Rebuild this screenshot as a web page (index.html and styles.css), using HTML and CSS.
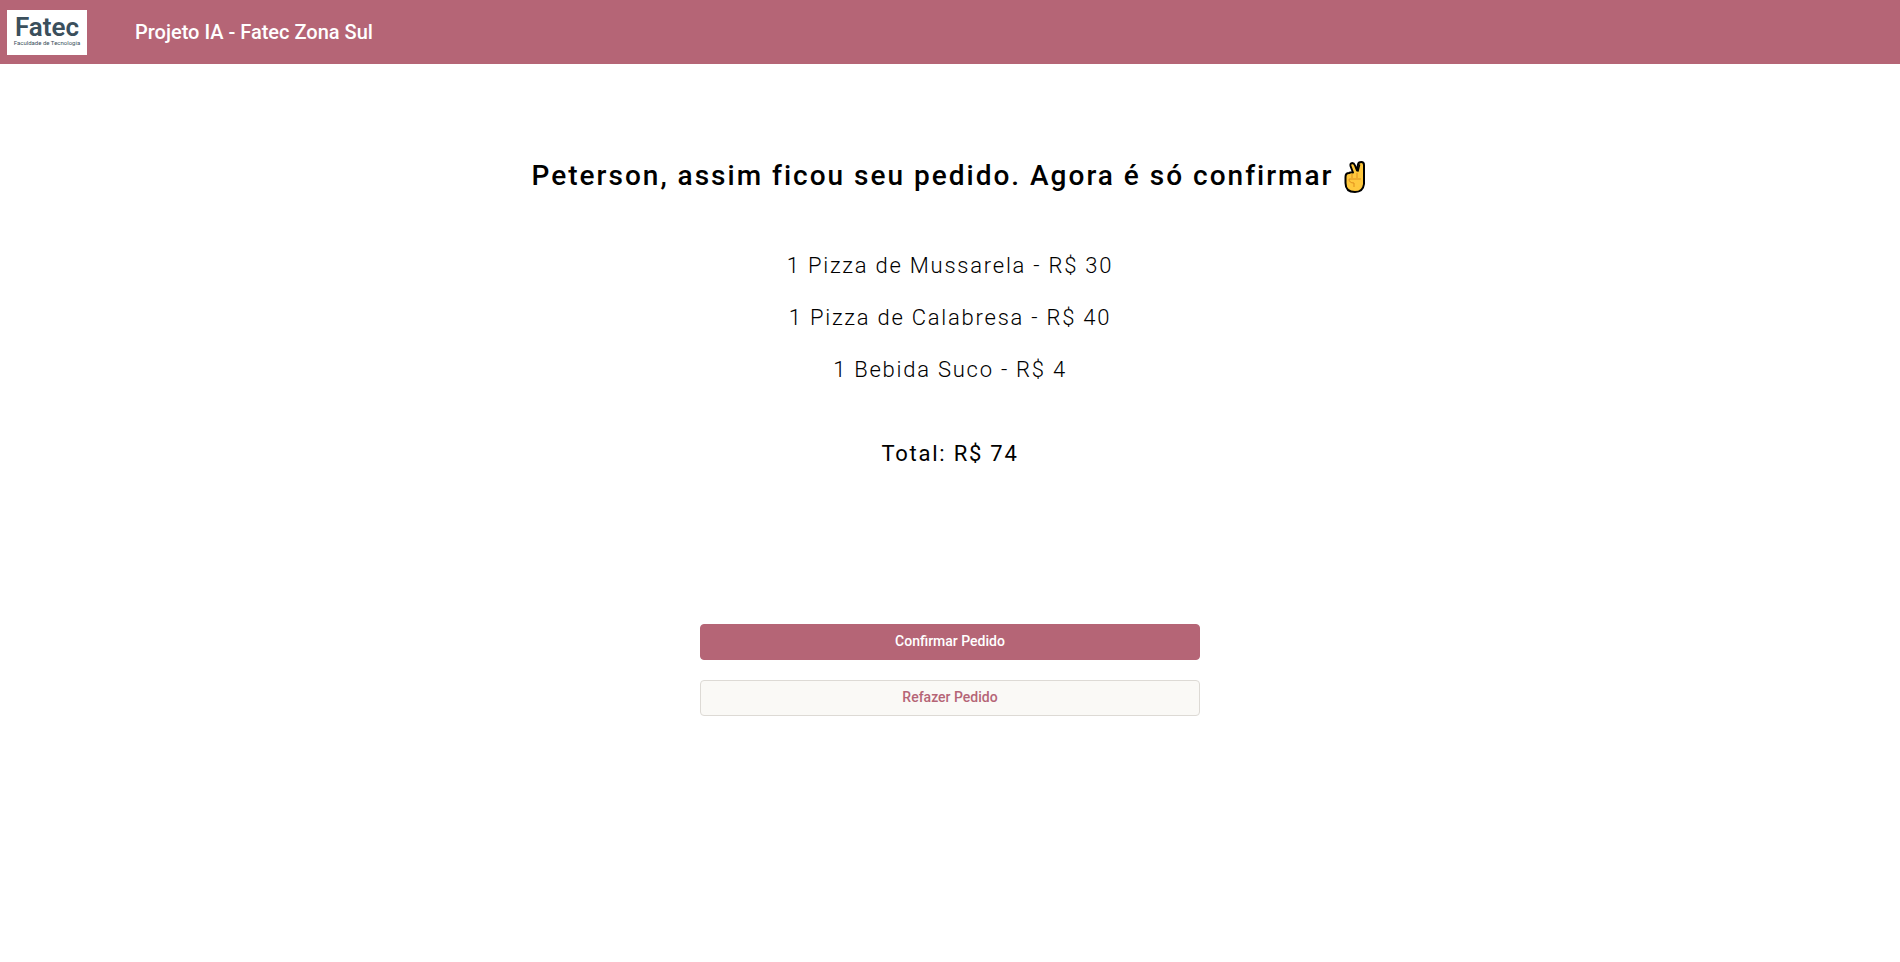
FILE: index.html
```html
<!DOCTYPE html>
<html lang="pt-BR">
<head>
  <meta charset="utf-8">
  <meta name="viewport" content="width=device-width, initial-scale=1">
  <title>Projeto IA - Fatec Zona Sul</title>
  <link rel="stylesheet" href="styles.css">
</head>
<body>
  <header class="topbar">
    <div class="logo">
      <span class="logo-name">Fatec</span>
      <span class="logo-tagline">Faculdade de Tecnologia</span>
    </div>
    <span class="topbar-title">Projeto IA - Fatec Zona Sul</span>
  </header>
  <main class="order">
    <h1 class="order-title">Peterson, assim ficou seu pedido. Agora é só confirmar
      <svg class="hand" viewBox="0 0 22 32" role="img" aria-label="Vitória">
        <path d="M1.500 16 Q1.500 12 5 12 Q7 11 9 11.500 L6.500 5 Q6 2.200 8.300 2 Q10 2 11 4.500 L13 9.500 L14 3.500 Q14.500 1 17.300 1 Q20 1 20 4 V23 Q19 31 11 31 Q1.500 31 1.500 22 Z" fill="#ffc83d" stroke="#000" stroke-width="2" stroke-linejoin="round"/>
        <path d="M15.500 4 L14 10" fill="none" stroke="#000" stroke-width="1.500" stroke-linecap="round"/>
        <path d="M8 13 V17 M13 12 V17 M5 18 H17 M5 18 Q5 22 10 22 V26" fill="none" stroke="#e08f1d" stroke-width="1"/>
      </svg>
    </h1>
    <ul class="items">
      <li>1 Pizza de Mussarela - R$ 30</li>
      <li>1 Pizza de Calabresa - R$ 40</li>
      <li>1 Bebida Suco - R$ 4</li>
    </ul>
    <p class="total">Total: R$ 74</p>
    <div class="actions">
      <button class="button button-primary" type="button">Confirmar Pedido</button>
      <button class="button button-secondary" type="button">Refazer Pedido</button>
    </div>
  </main>
</body>
</html>
```
FILE: styles.css
```css
* {
  box-sizing: border-box;
}

body {
  margin: 0;
  background: #fff;
  color: #000;
  font-family: Roboto, sans-serif;
}

.topbar {
  display: flex;
  align-items: center;
  gap: 48px;
  min-height: 64px;
  padding: 0 7px;
  background: #b56576;
  color: #fff;
}

.logo {
  display: flex;
  flex-direction: column;
  align-items: center;
  width: 80px;
  padding: 5px 0 9px;
  background: #fff;
  color: #3b4f5c;
}

.logo-name {
  font-size: 26px;
  font-weight: 600;
  line-height: 25px;
}

.logo-tagline {
  font-size: 6px;
  line-height: 6px;
  white-space: nowrap;
}

.topbar-title {
  font-size: 20px;
  font-weight: 500;
}

.order {
  display: flex;
  flex-direction: column;
  align-items: center;
  padding: 96px 16px 48px;
  text-align: center;
}

.order-title {
  margin: 0 0 48px;
  font-size: 28px;
  font-weight: 500;
  line-height: 32px;
  letter-spacing: 2px;
}

.hand {
  width: 22px;
  height: 32px;
  margin: -2px 2px;
  vertical-align: -6px;
}

.items {
  margin: 0 0 32px;
  padding: 0;
  list-style: none;
  font-size: 22px;
  font-weight: 300;
  line-height: 52px;
  letter-spacing: 0.08em;
}

.total {
  margin: 0 0 144px;
  font-size: 22px;
  line-height: 52px;
  letter-spacing: 0.08em;
}

.actions {
  display: flex;
  flex-direction: column;
  gap: 20px;
  width: 100%;
  max-width: 500px;
}

.button {
  height: 36px;
  padding: 0 16px 2px;
  border: 1px solid #b56576;
  border-radius: 4px;
  font: 500 14px Roboto, sans-serif;
  cursor: pointer;
}

.button-primary {
  background: #b56576;
  color: #fff;
}

.button-secondary {
  border-color: #dddad5;
  background: #faf9f6;
  color: #b56576;
}
```
